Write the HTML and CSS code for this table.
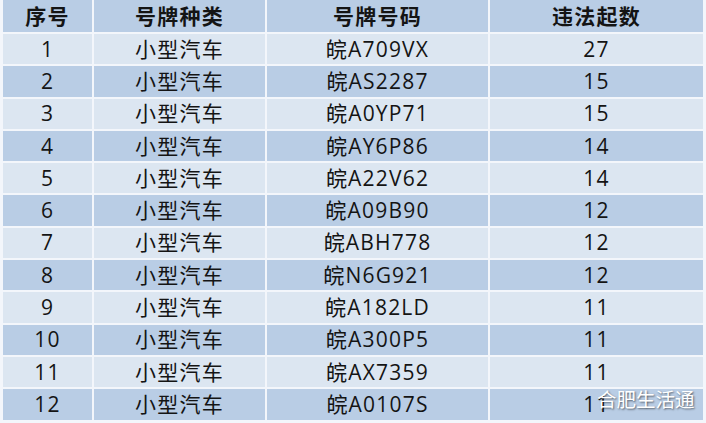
FILE: index.html
```html
<!DOCTYPE html>
<html lang="zh-CN">
<head>
<meta charset="utf-8">
<title>违法排行</title>
<link rel="stylesheet" href="styles.css">
</head>
<body>
<div class="page">
  <div class="table" role="table">
    <div class="cell head">序号</div><div class="cell head">号牌种类</div><div class="cell head">号牌号码</div><div class="cell head">违法起数</div>
    <div class="cell light">1</div><div class="cell light">小型汽车</div><div class="cell light">皖A709VX</div><div class="cell light">27</div>
    <div class="cell dark">2</div><div class="cell dark">小型汽车</div><div class="cell dark">皖AS2287</div><div class="cell dark">15</div>
    <div class="cell light">3</div><div class="cell light">小型汽车</div><div class="cell light">皖A0YP71</div><div class="cell light">15</div>
    <div class="cell dark">4</div><div class="cell dark">小型汽车</div><div class="cell dark">皖AY6P86</div><div class="cell dark">14</div>
    <div class="cell light">5</div><div class="cell light">小型汽车</div><div class="cell light">皖A22V62</div><div class="cell light">14</div>
    <div class="cell dark">6</div><div class="cell dark">小型汽车</div><div class="cell dark">皖A09B90</div><div class="cell dark">12</div>
    <div class="cell light">7</div><div class="cell light">小型汽车</div><div class="cell light">皖ABH778</div><div class="cell light">12</div>
    <div class="cell dark">8</div><div class="cell dark">小型汽车</div><div class="cell dark">皖N6G921</div><div class="cell dark">12</div>
    <div class="cell light">9</div><div class="cell light">小型汽车</div><div class="cell light">皖A182LD</div><div class="cell light">11</div>
    <div class="cell dark">10</div><div class="cell dark">小型汽车</div><div class="cell dark">皖A300P5</div><div class="cell dark">11</div>
    <div class="cell light">11</div><div class="cell light">小型汽车</div><div class="cell light">皖AX7359</div><div class="cell light">11</div>
    <div class="cell dark">12</div><div class="cell dark">小型汽车</div><div class="cell dark">皖A0107S</div><div class="cell dark">11</div>
  </div>
  <div class="watermark">合肥生活通</div>
</div>
</body>
</html>
```

FILE: styles.css
```css
html, body {
  margin: 0;
  padding: 0;
  background: #f3f6fb;
}
body {
  width: 706px;
  height: 423px;
  overflow: hidden;
  font-family: "Open Sans", "Noto Sans CJK SC", sans-serif;
}
.page {
  position: relative;
  width: 706px;
  height: 423px;
  padding: 0 3px;
  box-sizing: border-box;
}
.table {
  display: grid;
  grid-template-columns: 89px 171px 221px 213px;
  grid-template-rows: 32px repeat(12, 30.3px);
  gap: 2px;
}
.cell {
  display: flex;
  align-items: center;
  justify-content: center;
  font-size: 21px;
  letter-spacing: 1.2px;
  color: #141414;
  line-height: 1;
}
.head {
  background: #b9cde5;
  font-weight: bold;
}
.light {
  background: #dce6f1;
}
.dark {
  background: #b9cde5;
}
.watermark {
  position: absolute;
  left: 597px;
  top: 389px;
  font-size: 19.5px;
  color: #ffffff;
  line-height: 1;
  font-family: "Noto Sans CJK SC", sans-serif;
  text-shadow: 1px 1px 2px rgba(0, 0, 0, 0.55);
}
```
